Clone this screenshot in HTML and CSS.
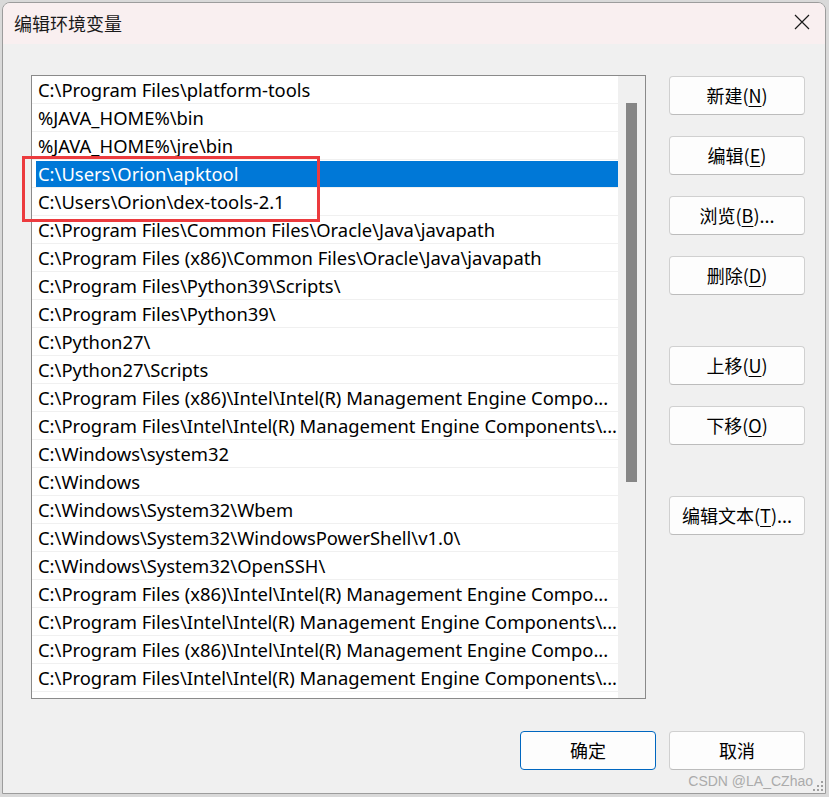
FILE: index.html
```html
<!DOCTYPE html>
<html lang="zh-CN">
<head>
  <meta charset="UTF-8">
  <title>编辑环境变量</title>
  <link rel="stylesheet" href="styles.css">
</head>
<body>

  <div class="window">
    <!-- Title bar -->
    <div class="titlebar">
      <span class="title">编辑环境变量</span>
      <span class="close">
        <svg width="16" height="16" viewBox="0 0 16 16"><path d="M1 1 L15 15 M15 1 L1 15" stroke="#1a1a1a" stroke-width="1.2" fill="none"/></svg>
      </span>
    </div>

    <div class="dialog">
      <div class="main">
        <!-- Path list -->
        <div class="listbox">
          <div class="rows">
            <div class="row"><span class="cell">C:\Program Files\platform-tools</span></div>
            <div class="row"><span class="cell">%JAVA_HOME%\bin</span></div>
            <div class="row"><span class="cell">%JAVA_HOME%\jre\bin</span></div>
            <div class="row selected"><span class="cell">C:\Users\Orion\apktool</span></div>
            <div class="row"><span class="cell">C:\Users\Orion\dex-tools-2.1</span></div>
            <div class="row"><span class="cell">C:\Program Files\Common Files\Oracle\Java\javapath</span></div>
            <div class="row"><span class="cell">C:\Program Files (x86)\Common Files\Oracle\Java\javapath</span></div>
            <div class="row"><span class="cell">C:\Program Files\Python39\Scripts\</span></div>
            <div class="row"><span class="cell">C:\Program Files\Python39\</span></div>
            <div class="row"><span class="cell">C:\Python27\</span></div>
            <div class="row"><span class="cell">C:\Python27\Scripts</span></div>
            <div class="row"><span class="cell">C:\Program Files (x86)\Intel\Intel(R) Management Engine Compo...</span></div>
            <div class="row"><span class="cell">C:\Program Files\Intel\Intel(R) Management Engine Components\...</span></div>
            <div class="row"><span class="cell">C:\Windows\system32</span></div>
            <div class="row"><span class="cell">C:\Windows</span></div>
            <div class="row"><span class="cell">C:\Windows\System32\Wbem</span></div>
            <div class="row"><span class="cell">C:\Windows\System32\WindowsPowerShell\v1.0\</span></div>
            <div class="row"><span class="cell">C:\Windows\System32\OpenSSH\</span></div>
            <div class="row"><span class="cell">C:\Program Files (x86)\Intel\Intel(R) Management Engine Compo...</span></div>
            <div class="row"><span class="cell">C:\Program Files\Intel\Intel(R) Management Engine Components\...</span></div>
            <div class="row"><span class="cell">C:\Program Files (x86)\Intel\Intel(R) Management Engine Compo...</span></div>
            <div class="row"><span class="cell">C:\Program Files\Intel\Intel(R) Management Engine Components\...</span></div>
          </div>
          <div class="scrollbar">
            <div class="thumb"></div>
          </div>
        </div>

        <!-- Side buttons -->
        <div class="side">
          <div class="group">
            <button class="btn">新建(<u>N</u>)</button>
            <button class="btn">编辑(<u>E</u>)</button>
            <button class="btn">浏览(<u>B</u>)...</button>
            <button class="btn">删除(<u>D</u>)</button>
          </div>
          <div class="group">
            <button class="btn">上移(<u>U</u>)</button>
            <button class="btn">下移(<u>O</u>)</button>
          </div>
          <div class="group">
            <button class="btn">编辑文本(<u>T</u>)...</button>
          </div>
        </div>
      </div>

      <!-- OK / Cancel -->
      <div class="footer">
        <button class="btn default">确定</button>
        <button class="btn">取消</button>
      </div>

      <!-- Red annotation round the two new entries -->
      <div class="mark"></div>

      <div class="watermark">CSDN @LA_CZhao</div>
      <svg class="grip" width="12" height="12" viewBox="0 0 12 12">
        <rect x="9" y="1" width="2" height="2" fill="#a0a0a0"/>
        <rect x="5" y="5" width="2" height="2" fill="#a0a0a0"/>
        <rect x="9" y="5" width="2" height="2" fill="#a0a0a0"/>
        <rect x="1" y="9" width="2" height="2" fill="#a0a0a0"/>
        <rect x="5" y="9" width="2" height="2" fill="#a0a0a0"/>
        <rect x="9" y="9" width="2" height="2" fill="#a0a0a0"/>
      </svg>
    </div>
  </div>

</body>
</html>
```

FILE: styles.css
```css
body {
  margin: 0;
  padding: 2px 3px 3px 2px;
  background-color: #d9d9d9;
  font-family: "Noto Sans", "Noto Sans CJK SC", sans-serif;
  color: #000;
}

.window {
  width: 822px;
  height: 790px;
  border: 1px solid #9c9c9c;
  border-radius: 8px 8px 0 0;
  background-color: #f0f0f0;
  overflow: hidden;
  display: flex;
  flex-direction: column;
}

.titlebar {
  height: 41px;
  flex-shrink: 0;
  background-color: #f9eff0;
  display: flex;
  align-items: center;
  justify-content: space-between;
  padding: 0 15px 0 11px;
}

.title {
  font-family: "Noto Sans CJK SC", sans-serif;
  font-size: 18px;
  color: #1a1a1a;
  margin-top: -2px;
}

.close {
  display: flex;
  width: 16px;
  height: 16px;
  margin-top: -3px;
}

.dialog {
  flex: 1;
  position: relative;
  padding: 31px 20px 0 28px;
}

.main {
  display: flex;
  gap: 23px;
}

.listbox {
  width: 613px;
  height: 622px;
  border: 1px solid #8a8a8a;
  background-color: #fff;
  display: flex;
}

.rows {
  width: 586px;
}

.row {
  height: 27px;
  border-bottom: 1px solid #f0f0f0;
  display: flex;
  align-items: stretch;
}

.cell {
  flex: 1;
  margin: 1px 0 0 4px;
  padding-left: 2px;
  font-size: 18.4px;
  line-height: 26px;
  white-space: nowrap;
  overflow: hidden;
}

.row.selected .cell {
  background-color: #0078d7;
  color: #fff;
}

.scrollbar {
  width: 27px;
  background-color: #f0f0f0;
  padding-top: 27px;
}

.thumb {
  width: 11px;
  height: 379px;
  margin-left: 8px;
  background-color: #868686;
}

.side {
  display: flex;
  flex-direction: column;
  gap: 51px;
  padding-top: 1px;
}

.group {
  display: flex;
  flex-direction: column;
  gap: 21px;
}

.btn {
  width: 136px;
  height: 39px;
  padding: 0 0 1px;
  background-color: #fdfdfd;
  border: 1px solid #d0d0d0;
  border-bottom-color: #bcbcbc;
  border-radius: 4px;
  font-family: "Noto Sans CJK SC", sans-serif;
  font-size: 18px;
  color: #000;
}

.btn u {
  text-underline-offset: 3px;
}

.btn.default {
  border: 1px solid #0067c0;
}

.footer {
  display: flex;
  justify-content: flex-end;
  gap: 13px;
  margin-top: 32px;
}

.mark {
  position: absolute;
  left: 19px;
  top: 112px;
  width: 292px;
  height: 60px;
  border: 3px solid #ec3b3e;
}

.watermark {
  position: absolute;
  right: 12px;
  bottom: 4px;
  font-family: "Liberation Sans", sans-serif;
  font-size: 14px;
  color: #ababab;
}

.grip {
  position: absolute;
  right: 1px;
  bottom: 1px;
}
```
